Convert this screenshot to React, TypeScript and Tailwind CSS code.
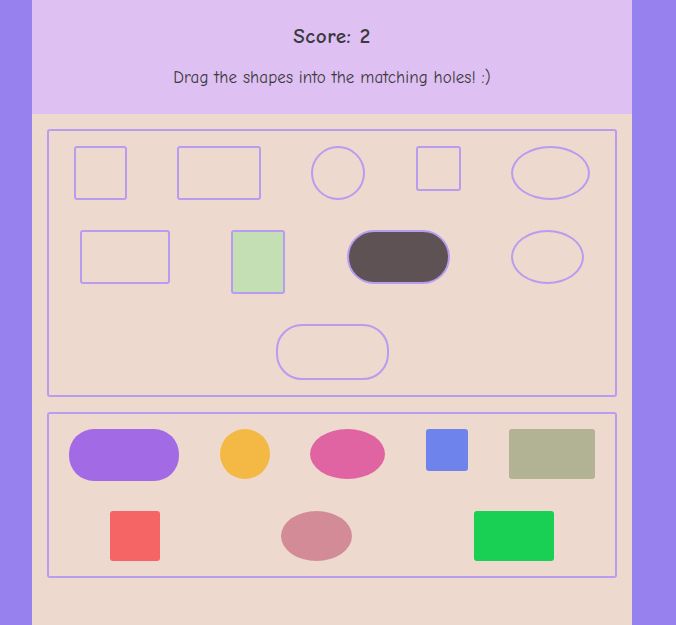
import React from "react";

const holes: { w: string; r: string; fill?: string }[] = [
  { w: "w-[53px] h-[54px]", r: "rounded-[3px]" },
  { w: "w-[84px] h-[54px]", r: "rounded-[3px]" },
  { w: "w-[54px] h-[54px]", r: "rounded-[50%]" },
  { w: "w-[45px] h-[45px]", r: "rounded-[3px]" },
  { w: "w-[79px] h-[54px]", r: "rounded-[50%]" },
  { w: "w-[90px] h-[54px]", r: "rounded-[3px]" },
  { w: "w-[54px] h-[64px]", r: "rounded-[3px]", fill: "bg-[#c3dfb3]" },
  { w: "w-[103px] h-[54px]", r: "rounded-[27px]", fill: "bg-[#5e5254]" },
  { w: "w-[73px] h-[54px]", r: "rounded-[50%]" },
  { w: "w-[113px] h-[56px]", r: "rounded-[26px]" },
];

const pieces: { w: string; r: string; fill: string }[] = [
  { w: "w-[110px] h-[52px]", r: "rounded-[25px]", fill: "bg-[#a36ae6]" },
  { w: "w-[50px] h-[50px]", r: "rounded-[50%]", fill: "bg-[#f4b844]" },
  { w: "w-[75px] h-[50px]", r: "rounded-[50%]", fill: "bg-[#e064a2]" },
  { w: "w-[42px] h-[42px]", r: "rounded-[3px]", fill: "bg-[#6e84ec]" },
  { w: "w-[86px] h-[50px]", r: "rounded-[3px]", fill: "bg-[#b2b394]" },
  { w: "w-[50px] h-[50px]", r: "rounded-[3px]", fill: "bg-[#f56565]" },
  { w: "w-[71px] h-[50px]", r: "rounded-[50%]", fill: "bg-[#d38c97]" },
  { w: "w-[80px] h-[50px]", r: "rounded-[3px]", fill: "bg-[#19d055]" },
];

export default function App() {
  return (
    <div
      className="min-h-screen bg-[#9681ee]"
      style={{ fontFamily: '"Comic Sans MS", "Comic Neue", "Noto Sans", sans-serif' }}
    >
      <div className="ml-[32px] w-[600px] min-h-screen bg-[#eed9ce] overflow-hidden">
        <header className="h-[114px] bg-[#dfc0f2] flex flex-col items-center pt-[23px] text-[#3b3a40]">
          <h1 className="text-[21px] leading-[26px] font-bold tracking-[0.6px]">Score: 2</h1>
          <p className="mt-[17px] text-[17px] leading-[24px] font-medium tracking-[0.1px]">
            Drag the shapes into the matching holes! :)
          </p>
        </header>

        <div className="mx-[15px] mt-[15px] border-2 border-[#b89cf0] rounded-[3px] flex flex-wrap justify-around items-start">
          {holes.map((h, i) => (
            <div
              key={i}
              className={`m-[15px] border-2 border-[#b89cf0] ${h.w} ${h.r} ${h.fill ?? ""}`}
            />
          ))}
        </div>

        <div className="mx-[15px] mt-[15px] border-2 border-[#b89cf0] rounded-[3px] flex flex-wrap justify-around items-start">
          {pieces.map((p, i) => (
            <div key={i} className={`m-[15px] ${p.w} ${p.r} ${p.fill}`} />
          ))}
        </div>
      </div>
    </div>
  );
}
